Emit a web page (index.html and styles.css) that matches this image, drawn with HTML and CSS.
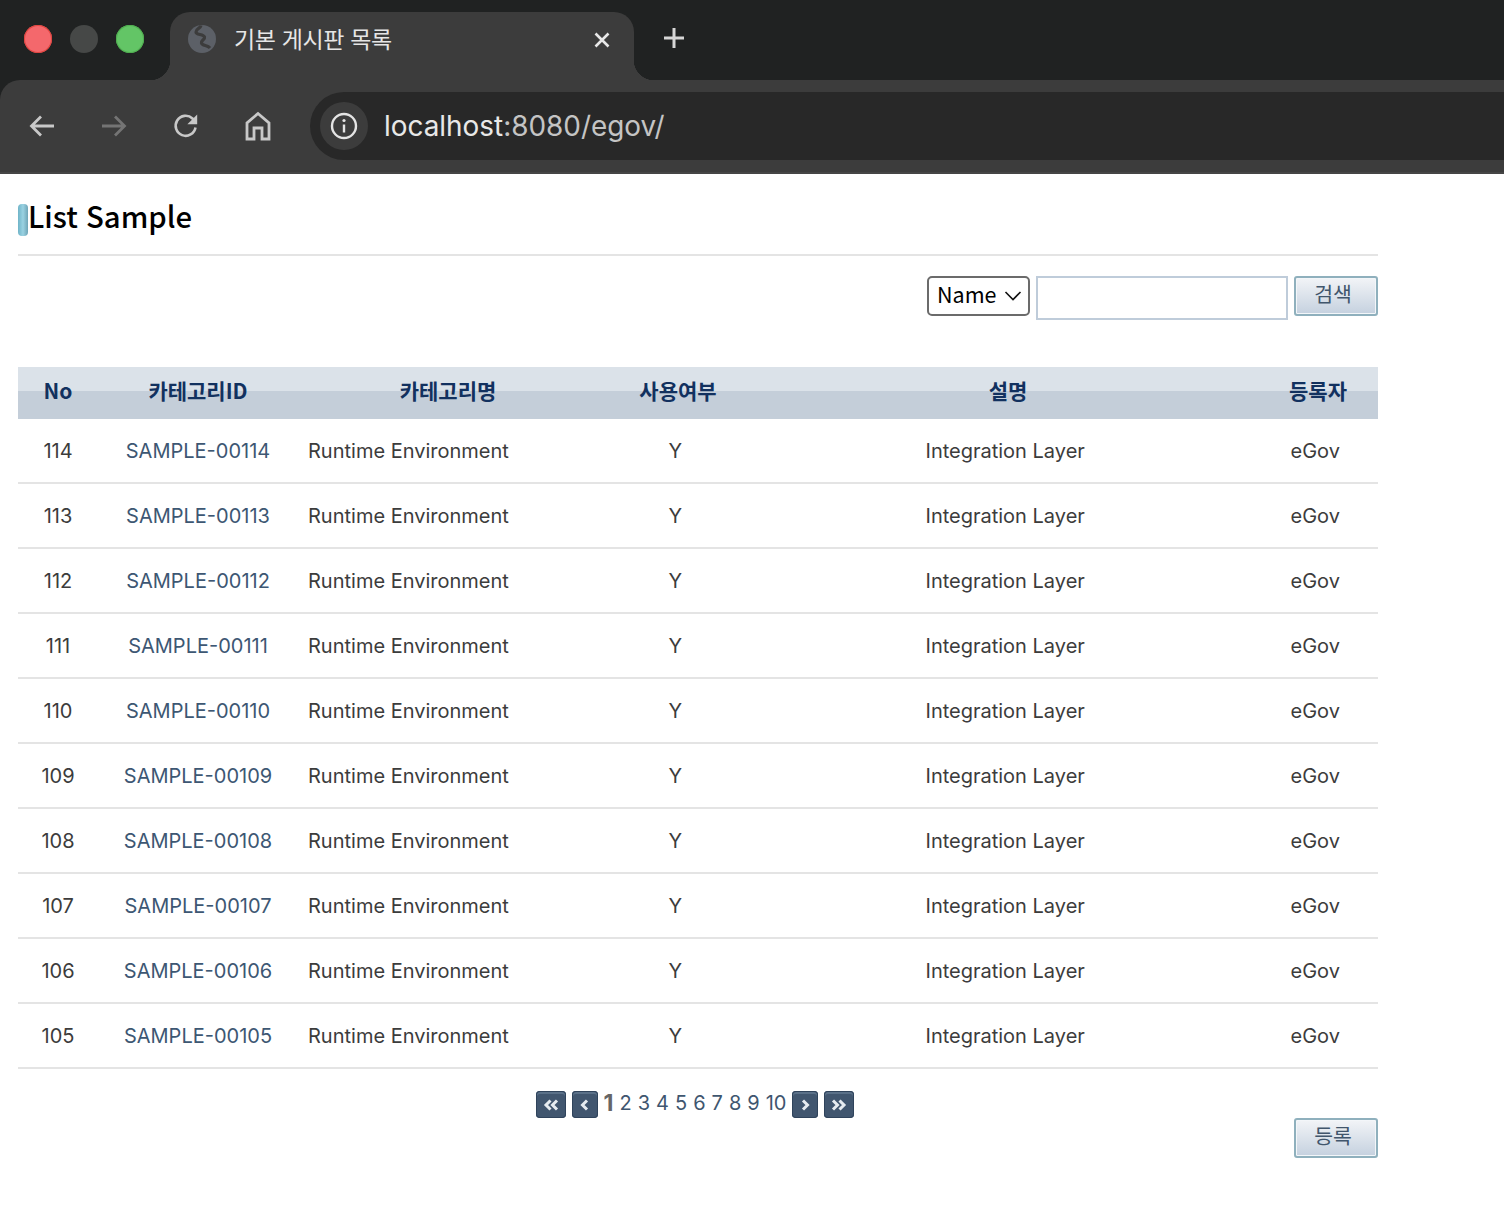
FILE: index.html
```html
<!DOCTYPE html>
<html lang="ko">
<head>
<meta charset="utf-8">
<title>기본 게시판 목록</title>
<link rel="stylesheet" href="styles.css">
</head>
<body>
<header class="chrome">
  <div class="tabstrip">
    <div class="lights"><span class="light red"></span><span class="light grey"></span><span class="light green"></span></div>
    <div class="tab">
      <svg class="globe" width="30" height="30" viewBox="0 0 30 30"><circle cx="15" cy="15" r="14" fill="#5c6067"/><path d="M14 1.500c-.5 3-5 3-5 6.500 0 3.500 7.500 1.500 8.500 5 .7 2.500-3.500 3-3 6 .5 3 6 2 8.500 5" stroke="#3c3c3c" stroke-width="3.200" fill="none"/></svg>
      <span class="tab-title">기본 게시판 목록</span>
      <svg class="tab-close" width="18" height="18" viewBox="0 0 18 18"><path d="M2.5 2.5l13 13M15.5 2.500l-13 13" stroke="#e8e8e8" stroke-width="2.600" fill="none"/></svg>
    </div>
    <svg class="newtab" width="24" height="24" viewBox="0 0 24 24"><path d="M12 2v20M2 12h20" stroke="#d6d6d6" stroke-width="3" fill="none"/></svg>
  </div>
  <div class="toolbar">
    <div class="navs">
      <svg width="28" height="28" viewBox="0 0 28 28"><path d="M26 14H4M13 4.500L3.500 14l9.500 9.500" stroke="#c8c8c8" stroke-width="2.800" fill="none"/></svg>
      <svg width="28" height="28" viewBox="0 0 28 28"><path d="M2 14h22M15 4.500l9.500 9.500-9.500 9.500" stroke="#747474" stroke-width="2.800" fill="none"/></svg>
      <svg width="28" height="28" viewBox="0 0 28 28"><path d="M23.500 15.500A10 10 0 1 1 20.500 6.500L24 10" stroke="#c8c8c8" stroke-width="2.600" fill="none"/><path d="M25.200 2.500v9.800h-9.800z" fill="#c8c8c8"/></svg>
      <svg width="28" height="30" viewBox="0 0 28 30"><path d="M3 28V12L14 2.500 25 12v16H18V17h-8v11z" stroke="#c8c8c8" stroke-width="2.800" fill="none"/></svg>
    </div>
    <div class="omnibox">
      <span class="info"><svg width="28" height="28" viewBox="0 0 28 28"><circle cx="14" cy="14" r="12" stroke="#e4e4e4" stroke-width="2.400" fill="none"/><path d="M14 12.500v8" stroke="#e4e4e4" stroke-width="2.400"/><circle cx="14" cy="8.500" r="1.600" fill="#e4e4e4"/></svg></span>
      <span class="url"><span class="url-host">localhost</span>:8080/egov/</span>
    </div>
  </div>
</header>

<main class="page">
  <h1 class="title"><span class="title-mark"></span>List Sample</h1>

  <form class="search">
    <span class="select">Name<svg width="18" height="10" viewBox="0 0 18 10"><path d="M1.500 1l7.500 7.500L16.500 1" stroke="#111" stroke-width="1.600" fill="none"/></svg></span>
    <span class="input"></span>
    <span class="btn">검색</span>
  </form>

  <table class="list">
    <colgroup><col class="c1"><col class="c2"><col class="c3"><col class="c4"><col class="c5"><col class="c6"></colgroup>
    <thead><tr><th>No</th><th>카테고리ID</th><th>카테고리명</th><th>사용여부</th><th>설명</th><th>등록자</th></tr></thead>
    <tbody>
      <tr><td>114</td><td><a>SAMPLE-00114</a></td><td class="left">Runtime Environment</td><td>Y&nbsp;</td><td>Integration Layer&nbsp;</td><td>eGov&nbsp;</td></tr>
      <tr><td>113</td><td><a>SAMPLE-00113</a></td><td class="left">Runtime Environment</td><td>Y&nbsp;</td><td>Integration Layer&nbsp;</td><td>eGov&nbsp;</td></tr>
      <tr><td>112</td><td><a>SAMPLE-00112</a></td><td class="left">Runtime Environment</td><td>Y&nbsp;</td><td>Integration Layer&nbsp;</td><td>eGov&nbsp;</td></tr>
      <tr><td>111</td><td><a>SAMPLE-00111</a></td><td class="left">Runtime Environment</td><td>Y&nbsp;</td><td>Integration Layer&nbsp;</td><td>eGov&nbsp;</td></tr>
      <tr><td>110</td><td><a>SAMPLE-00110</a></td><td class="left">Runtime Environment</td><td>Y&nbsp;</td><td>Integration Layer&nbsp;</td><td>eGov&nbsp;</td></tr>
      <tr><td>109</td><td><a>SAMPLE-00109</a></td><td class="left">Runtime Environment</td><td>Y&nbsp;</td><td>Integration Layer&nbsp;</td><td>eGov&nbsp;</td></tr>
      <tr><td>108</td><td><a>SAMPLE-00108</a></td><td class="left">Runtime Environment</td><td>Y&nbsp;</td><td>Integration Layer&nbsp;</td><td>eGov&nbsp;</td></tr>
      <tr><td>107</td><td><a>SAMPLE-00107</a></td><td class="left">Runtime Environment</td><td>Y&nbsp;</td><td>Integration Layer&nbsp;</td><td>eGov&nbsp;</td></tr>
      <tr><td>106</td><td><a>SAMPLE-00106</a></td><td class="left">Runtime Environment</td><td>Y&nbsp;</td><td>Integration Layer&nbsp;</td><td>eGov&nbsp;</td></tr>
      <tr><td>105</td><td><a>SAMPLE-00105</a></td><td class="left">Runtime Environment</td><td>Y&nbsp;</td><td>Integration Layer&nbsp;</td><td>eGov&nbsp;</td></tr>
    </tbody>
  </table>

  <nav class="pager">
    <span class="pg pg-wide"><svg width="18" height="12" viewBox="0 0 18 12"><path d="M8.500 1.500L4 6l4.500 4.500M15 1.500L10.500 6l4.500 4.500" stroke="#e6ebf0" stroke-width="3" fill="none"/></svg></span>
    <span class="pg"><svg width="10" height="12" viewBox="0 0 10 12"><path d="M7 1.500L2.500 6 7 10.500" stroke="#e6ebf0" stroke-width="3" fill="none"/></svg></span>
    <span class="nums"><b>1</b><a>2</a><a>3</a><a>4</a><a>5</a><a>6</a><a>7</a><a>8</a><a>9</a><a>10</a></span>
    <span class="pg"><svg width="10" height="12" viewBox="0 0 10 12"><path d="M3 1.500L7.500 6 3 10.500" stroke="#e6ebf0" stroke-width="3" fill="none"/></svg></span>
    <span class="pg pg-wide"><svg width="18" height="12" viewBox="0 0 18 12"><path d="M3 1.500L7.500 6 3 10.500M9.500 1.500L14 6l-4.500 4.500" stroke="#e6ebf0" stroke-width="3" fill="none"/></svg></span>
  </nav>

  <div class="actions"><span class="btn">등록</span></div>
</main>
</body>
</html>
```
FILE: styles.css
```css
* { box-sizing: border-box; }
html, body { margin: 0; padding: 0; background: #fff; }
body { font-family: "Noto Sans CJK KR", "Noto Sans", sans-serif; color: #333; overflow: hidden; }

.chrome { background: #202222; height: 174px; display: flex; flex-direction: column; }
.tabstrip { height: 80px; display: flex; align-items: flex-start; }
.lights { width: 170px; display: flex; gap: 18px; padding: 25px 0 0 24px; }
.light { width: 28px; height: 28px; border-radius: 50%; }
.red { background: #f4686c; box-shadow: inset 0 0 0 1px #e0443e; }
.grey { background: #464847; }
.green { background: #63c566; box-shadow: inset 0 0 0 1px #4fae4f; }

.tab { position: relative; width: 464px; height: 68px; margin-top: 12px; background: #3c3c3c; border-radius: 20px 20px 0 0; display: flex; align-items: flex-start; padding: 12px 23px 0 17px; }
.tab::before, .tab::after { content: ""; position: absolute; bottom: 0; width: 20px; height: 20px; }
.tab::before { left: -20px; background: radial-gradient(circle at 0 0, #202222 20px, #3c3c3c 20.500px); }
.tab::after { right: -20px; background: radial-gradient(circle at 100% 0, #202222 20px, #3c3c3c 20.500px); }
.globe { flex: none; }
.tab-title { margin-left: 17px; flex: 1; font-size: 23px; line-height: 28px; letter-spacing: -0.35px; color: #e6e6e6; }
.tab-close { margin-top: 7px; }
.newtab { margin: 26px 0 0 28px; }

.toolbar { flex: 1; background: #3c3c3c; border-radius: 20px 0 0 0; display: flex; align-items: flex-start; padding-top: 12px; border-bottom: 2px solid #454545; }
.navs { width: 310px; height: 68px; display: flex; align-items: center; gap: 44px; padding-left: 28px; }
.omnibox { flex: 1; height: 68px; background: #282828; border-radius: 34px 0 0 34px; display: flex; align-items: center; padding-left: 10px; }
.info { width: 48px; height: 48px; border-radius: 50%; background: #3c3c3c; display: flex; align-items: center; justify-content: center; }
.url { margin: 0 0 0 16px; font-family: Inter, sans-serif; font-size: 27.900px; color: #c4c4c4; white-space: nowrap; }
.url-host { color: #e8e8e8; }

.page { width: 1378px; padding-left: 18px; }
.title { margin: 0; height: 82px; padding-top: 23px; border-bottom: 2px solid #e4e4e4; font-size: 29.300px; line-height: 36px; font-weight: 500; color: #000; display: flex; align-items: flex-start; }
.title-mark { width: 10px; height: 32px; margin-top: 7px; border-radius: 4px; background: linear-gradient(90deg, #6fb4c8, #9ad2e2 50%, #6ea4b6); }

.search { display: flex; justify-content: flex-end; align-items: flex-start; gap: 6px; padding-top: 20px; height: 111px; }
.select { width: 103px; height: 40px; border: 2px solid #6b6b6b; border-radius: 5px; display: flex; align-items: center; justify-content: space-between; padding: 0 6px 5px 8px; font-size: 21.500px; color: #000; }
.select svg { margin-top: 5px; }
.input { width: 252px; height: 44px; border: 2px solid #bfccda; background: #fff; }
.btn { width: 84px; height: 40px; border: 2px solid #8fb0bd; border-radius: 3px; background: linear-gradient(#f2f4f7, #c5d1df); box-shadow: inset 0 0 0 1px #f3f6f9; display: flex; align-items: center; justify-content: center; font-size: 20.500px; color: #41566c; padding: 0 6px 7px 0; }

.list { width: 1360px; border-collapse: separate; border-spacing: 0; table-layout: fixed; font-family: Inter, "Noto Sans CJK KR", sans-serif; font-size: 20px; }
.c1 { width: 80px; } .c2 { width: 200px; } .c3 { width: 300px; } .c4 { width: 160px; } .c5 { width: 500px; } .c6 { width: 120px; }
.list th { height: 52px; padding: 0 0 6px; background: linear-gradient(#dbe2e9 0, #dbe2e9 24px, #c4ced9 24px, #c4ced9 100%); color: #12315f; font-family: "Noto Sans CJK KR", sans-serif; font-size: 21px; font-weight: 700; text-align: center; }
.list td { height: 65px; padding: 1px 0 0; border-bottom: 2px solid #e4e4e4; text-align: center; color: #3c3c3c; }
.list td.left { text-align: left; padding-left: 10px; }
.list a { color: #3d5773; }

.pager { display: flex; justify-content: center; align-items: center; gap: 6px; height: 27px; margin-top: 22px; padding-right: 6px; }
.pg { width: 26px; height: 27px; border-radius: 4px; background: #41566f; box-shadow: inset 0 0 0 1px #2f435b, inset 0 2px 0 1px #5a7088; display: flex; align-items: center; justify-content: center; }
.pg-wide { width: 30px; }
.nums { display: flex; gap: 6px; font-family: Inter, sans-serif; font-size: 20px; line-height: 24px; color: #3f566f; margin-top: -4px; }
.nums b { color: #666; font-weight: 700; font-size: 23px; }

.actions { display: flex; justify-content: flex-end; }
```
